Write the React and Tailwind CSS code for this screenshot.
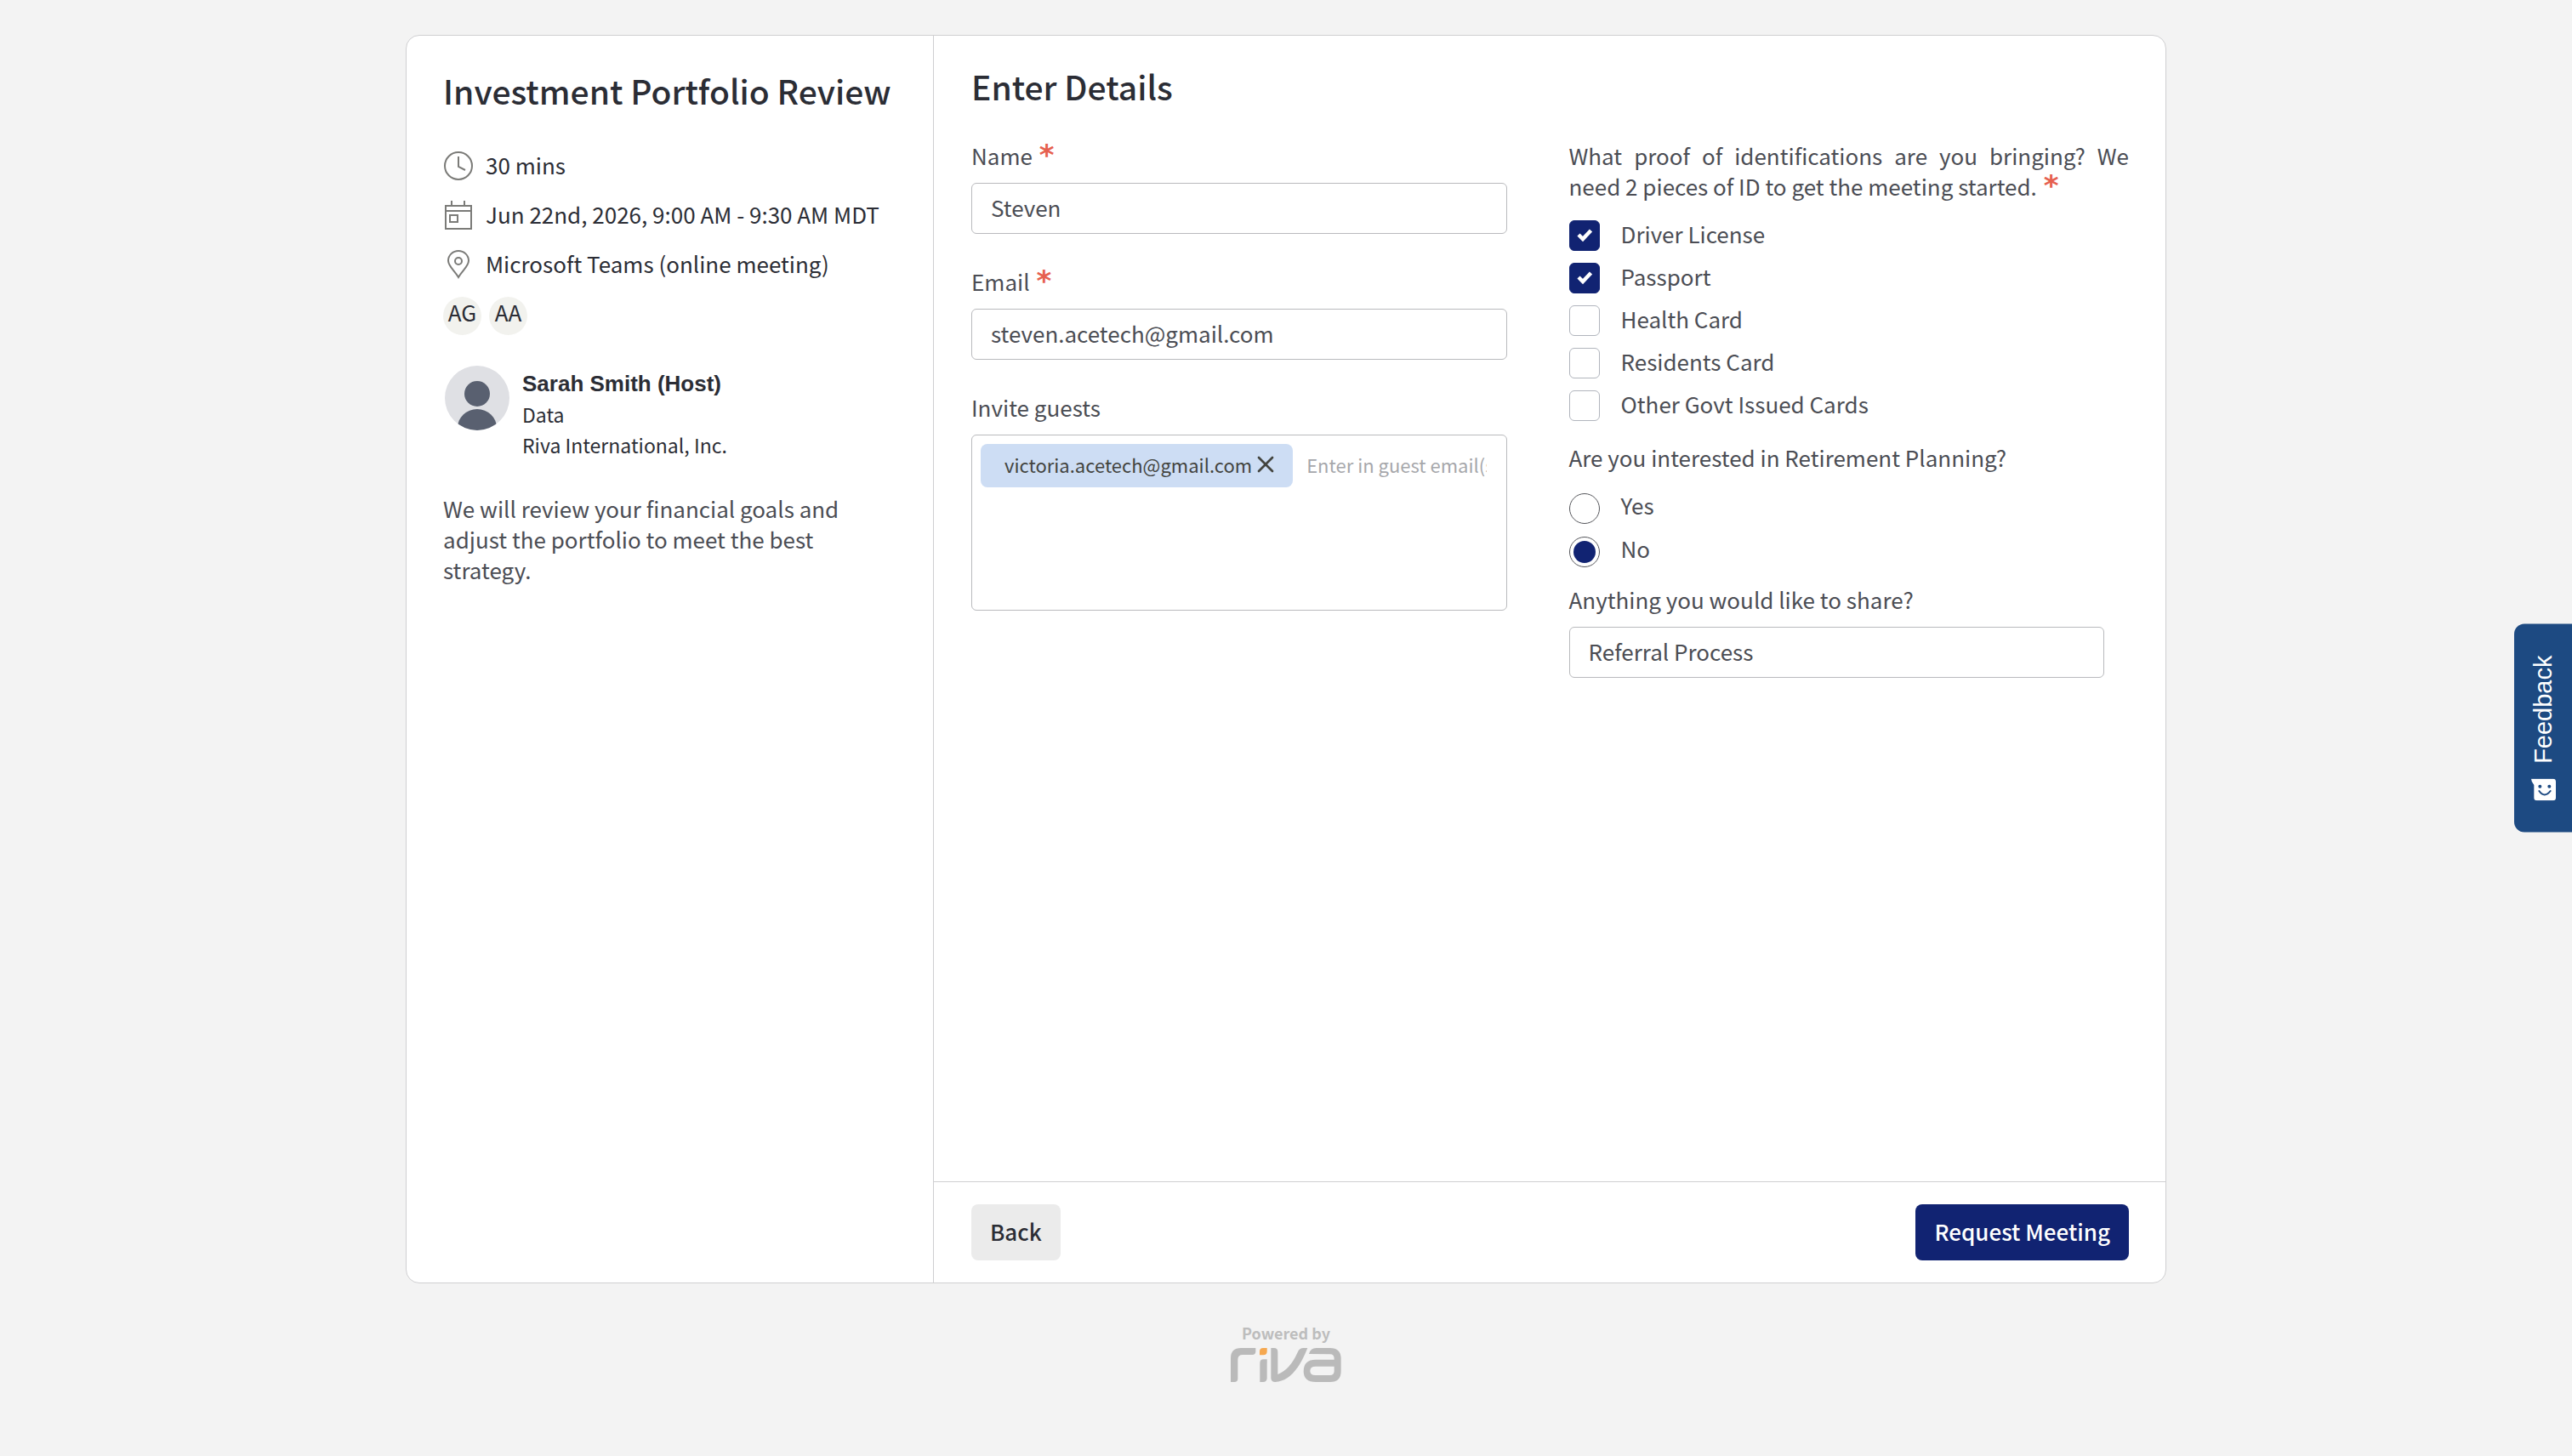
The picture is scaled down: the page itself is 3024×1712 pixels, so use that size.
import { X } from 'lucide-react';

const idOptions = [
    { label: 'Driver License', checked: true },
    { label: 'Passport', checked: true },
    { label: 'Health Card', checked: false },
    { label: 'Residents Card', checked: false },
    { label: 'Other Govt Issued Cards', checked: false },
];

const inputClass = "w-full h-[60px] px-[22px] pb-1 rounded-md border border-[#b9babd] bg-white text-[26px] text-[#4b4d54] outline-none";

function ClockIcon() {
    return (
        <svg className="w-9 h-9 shrink-0" viewBox="0 0 36 36" fill="none" stroke="#7b7b78" strokeWidth="2">
            <circle cx="18" cy="19" r="16" />
            <path d="M18 8v12l8 4" />
        </svg>
    );
}

function CalendarIcon() {
    return (
        <svg className="w-9 h-9 shrink-0" viewBox="0 0 36 36" fill="none" stroke="#7b7b78" strokeWidth="2">
            <path d="M3 8h30v27H3zM3 14h30M10 2v6M25 2v6M8 19h9v8H8z" />
        </svg>
    );
}

function PinIcon() {
    return (
        <svg className="w-9 h-9 shrink-0" viewBox="0 0 36 36" fill="none" stroke="#7b7b78" strokeWidth="2">
            <path d="M18 34C14 27 6 21 6 14.500a12 11.500 0 0 1 24 0C30 21 22 27 18 34z" />
            <circle cx="18" cy="15" r="4" />
        </svg>
    );
}

function Avatar() {
    return (
        <svg className="w-[76px] h-[76px] shrink-0" viewBox="0 0 76 76">
            <clipPath id="avatar-clip">
                <circle cx="38" cy="38" r="38" />
            </clipPath>
            <g clipPath="url(#avatar-clip)">
                <rect width="76" height="76" fill="#dfe0e4" />
                <circle cx="38" cy="33" r="15" fill="#596070" />
                <ellipse cx="38" cy="73" rx="23" ry="22" fill="#596070" />
            </g>
        </svg>
    );
}

function RivaLogo() {
    return (
        <svg className="w-[130px] h-10" viewBox="0 0 390 120" fill="#bababa" role="img" aria-label="riva">
            <path d="M0 120V36Q0 0 36 0H88V12Q88 24 76 24H42Q25 24 25 41V108Q25 120 13 120Z" />
            <path d="M102 12Q102 0 114 0H128V12Q128 25 115 25H102Z" fill="#f5a850" />
            <path d="M103 53Q103 40 116 40H128V106Q128 120 114 120H103Z" />
            <path d="M142 0H153Q166 0 166 14V93Q210 75 236 15Q242 0 257 0H271Q225 118 157 120Q142 120 142 106Z" />
            <path fillRule="evenodd" d="M276 21Q281 0 302 0H350Q389 0 389 38V82Q389 120 351 120H300Q257 120 257 82Q257 41 300 41H365V38Q365 22 350 22ZM365 65H300Q280 65 280 81Q280 96 298 96H350Q365 96 365 82Z" />
        </svg>
    );
}

function Required() {
    return <span className="ml-0.5 font-['DejaVu_Sans',sans-serif] text-[34px] leading-[0px] font-bold text-[#e6604f]">*</span>;
}

function Field({ id, label, required, type = 'text', value }) {
    return (
        <div>
            <label htmlFor={id} className="block h-9 mb-[14px] whitespace-nowrap">
                {label} {required && <Required />}
            </label>
            <input id={id} type={type} defaultValue={value} className={inputClass} />
        </div>
    );
}

function MeetingSummary() {
    return (
        <aside className="w-[620px] shrink-0 border-r border-[#cfcfd1] pl-[43px] pr-8 pt-10 text-[#2b2d35]">
            <h1 className="text-[39px] leading-[48px] font-medium whitespace-nowrap">Investment Portfolio Review</h1>

            <ul className="mt-[46px] flex flex-col gap-[22px]">
                <li className="flex gap-[14px]"><ClockIcon />30 mins</li>
                <li className="flex gap-[14px] whitespace-nowrap"><CalendarIcon />Jun 22nd, 2026, 9:00 AM - 9:30 AM MDT</li>
                <li className="flex gap-[14px]"><PinIcon />Microsoft Teams (online meeting)</li>
            </ul>

            <div className="mt-[21px] flex gap-[9px]">
                <span className="w-[45px] h-[45px] rounded-full bg-[#f2f2ee] text-center">AG</span>
                <span className="w-[45px] h-[45px] rounded-full bg-[#f2f2ee] text-center">AA</span>
            </div>

            <div className="mt-9 ml-0.5 flex gap-[15px]">
                <Avatar />
                <div className="pt-[3px] text-[23px]">
                    <p className="font-['Liberation_Sans',sans-serif] text-[26px] font-bold">Sarah Smith (Host)</p>
                    <p>Data</p>
                    <p>Riva International, Inc.</p>
                </div>
            </div>

            <p className="mt-[39px] max-w-[490px] text-[#4b4d54]">
                We will review your financial goals and adjust the portfolio to meet the best strategy.
            </p>
        </aside>
    );
}

function GuestsField() {
    return (
        <div>
            <label htmlFor="guests" className="block h-9 mb-[14px]">Invite guests</label>
            <div className="h-[207px] p-[10px] rounded-md border border-[#b9babd] flex items-start text-[22px]">
                <span className="h-[51px] shrink-0 pl-7 pr-4 pb-1 rounded-lg bg-[#cdddf4] flex items-center text-[#43443f]">
                    victoria.acetech@gmail.com
                    <button type="button" aria-label="Remove guest">
                        <X className="w-8 h-8" strokeWidth={2} />
                    </button>
                </span>
                <input
                    id="guests"
                    type="text"
                    placeholder="Enter in guest email(s)"
                    className="h-[51px] min-w-0 flex-1 ml-4 mr-[13px] pb-1 outline-none placeholder:text-[#a6a7ab]"
                />
            </div>
        </div>
    );
}

function IdCheckbox({ label, checked }) {
    return (
        <label className="flex h-9 gap-[25px] leading-8">
            <span className="grid shrink-0">
                <input
                    type="checkbox"
                    defaultChecked={checked}
                    className="peer col-start-1 row-start-1 w-9 h-9 appearance-none rounded-md border border-[#b1b5bd] checked:border-[#112372] checked:bg-[#112372]"
                />
                <svg className="hidden peer-checked:block col-start-1 row-start-1 w-9 h-9 pointer-events-none" viewBox="0 0 36 36" fill="none" stroke="#fff" strokeWidth="4.500">
                    <path d="M11 17l5 5L25.500 12" />
                </svg>
            </span>
            {label}
        </label>
    );
}

function RetirementRadio({ label, checked }) {
    return (
        <label className="flex h-9 gap-[25px] leading-7">
            <input
                type="radio"
                name="retirement"
                defaultChecked={checked}
                className="w-9 h-9 shrink-0 p-1 appearance-none rounded-full border border-[#56575c] bg-clip-content checked:bg-[#112372]"
            />
            {label}
        </label>
    );
}

function DetailsForm() {
    return (
        <form className="flex-1 min-w-0 flex flex-col">
            <div className="flex-1 pl-11 pr-[43px] pt-[35px]">
                <h2 className="text-[39px] leading-[48px] font-medium text-[#2b2d35]">Enter Details</h2>

                <div className="mt-10 grid grid-cols-2 gap-11">
                    <div className="flex flex-col gap-[38px] pr-[29px]">
                        <Field id="name" label="Name" required value="Steven" />
                        <Field id="email" label="Email" required type="email" value="steven.acetech@gmail.com" />
                        <GuestsField />
                    </div>

                    <div>
                        <fieldset>
                            <legend className="h-[72px] text-justify">
                                What proof of identifications are you bringing? We need 2 pieces of ID to get the meeting started. <Required />
                            </legend>
                            <div className="mt-[22px] flex flex-col gap-[14px]">
                                {idOptions.map(option => (
                                    <IdCheckbox key={option.label} {...option} />
                                ))}
                            </div>
                        </fieldset>

                        <fieldset className="mt-[25px]">
                            <legend>Are you interested in Retirement Planning?</legend>
                            <div className="mt-6 flex flex-col gap-[15px]">
                                <RetirementRadio label="Yes" />
                                <RetirementRadio label="No" checked />
                            </div>
                        </fieldset>

                        <div className="mt-5 pr-[29px]">
                            <Field id="share" label="Anything you would like to share?" value="Referral Process" />
                        </div>
                    </div>
                </div>
            </div>

            <div className="border-t border-[#cfcfd1] pl-11 pr-[43px] py-[26px] flex justify-between font-medium">
                <button type="button" className="h-[66px] px-[22px] pb-0.5 rounded-lg bg-[#ebebeb] text-[#2b2d35]">Back</button>
                <button type="submit" className="h-[66px] px-[22px] pb-0.5 rounded-lg bg-[#112372] text-white">Request Meeting</button>
            </div>
        </form>
    );
}

function FeedbackTab() {
    return (
        <button type="button" className="fixed right-0 top-1/2 -translate-y-1/2 w-[68px] h-[245px] rounded-l-xl bg-[#1d4a82] text-white flex flex-col items-center justify-center gap-[18px]">
            <span className="rotate-180 [writing-mode:vertical-rl] font-['Liberation_Sans',sans-serif] text-[29px] leading-8">Feedback</span>
            <svg className="w-[29px] h-[26px]" viewBox="0 0 87 77">
                <path d="M0 0H77Q87 0 87 10V67Q87 77 77 77H20Q10 77 10 67V22Q0 10 0 0Z" fill="#fff" />
                <circle cx="31" cy="27" r="6" fill="#1d4a82" />
                <circle cx="64" cy="27" r="6" fill="#1d4a82" />
                <path d="M28 43Q47 70 68 43" fill="none" stroke="#1d4a82" strokeWidth="6" strokeLinecap="round" />
            </svg>
        </button>
    );
}

export default function App() {
    return (
        <div className="min-h-screen flex flex-col items-center bg-[#f3f3f3] pt-[41px] font-['Noto_Sans_CJK_SC','Noto_Sans',sans-serif] text-[26px] leading-9 text-[#4b4d54]">
            <main className="w-full max-w-[2070px] flex-1 flex rounded-2xl border border-[#cfcfd1] bg-white">
                <MeetingSummary />
                <DetailsForm />
            </main>

            <footer className="h-[203px] pt-10 flex flex-col items-center">
                <p className="text-[18px] leading-9 font-bold text-[#bdbdbd]">Powered by</p>
                <RivaLogo />
            </footer>

            <FeedbackTab />
        </div>
    );
}
